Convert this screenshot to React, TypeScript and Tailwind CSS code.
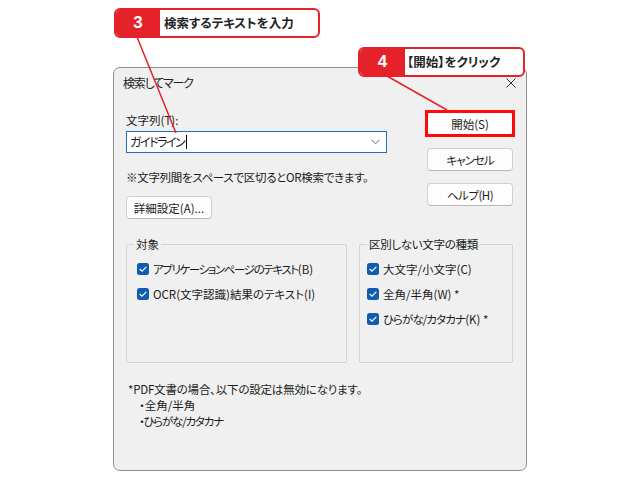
import React from "react";

const Check = () => (
  <svg width="12" height="12" viewBox="0 0 12 12" className="shrink-0">
    <rect x="0" y="0" width="12" height="12" rx="2.5" fill="#0f5cb0" />
    <path d="M3 6.3 L5.1 8.2 L9 4.2" stroke="#ffffff" strokeWidth="1.2" fill="none" strokeLinecap="round" strokeLinejoin="round" />
  </svg>
);

const Row = ({ children }: { children: React.ReactNode }) => (
  <div className="flex items-center gap-[4px] h-[16px]">
    <Check />
    <span>{children}</span>
  </div>
);

const Btn = ({ children, className = "" }: { children: React.ReactNode; className?: string }) => (
  <div
    className={
      "h-[23px] w-[86px] flex items-center justify-center rounded-[4px] border border-[#d0d0d0] border-b-[#b8b8b8] bg-[#fdfdfd] " +
      className
    }
  >
    {children}
  </div>
);

export default function App() {
  return (
    <div className="relative w-[640px] h-[480px] bg-white overflow-hidden pt-[67px] pl-[113px] font-['Noto_Sans_CJK_JP',sans-serif] [font-feature-settings:'palt']">
      {/* dialog */}
      <div className="w-[414px] h-[404px] bg-[#f0f0f0] border border-[#8e8e8e] rounded-[7px] flex flex-col text-[11.5px] leading-[16px] text-[#1b1b1b]">
        <div className="h-[30px] flex items-center justify-between pl-[9px] pr-[10px]">
          <span className="text-[12px] text-[#222] tracking-[-1.2px]">検索してマーク</span>
          <svg width="10" height="10" viewBox="0 0 10 10">
            <path d="M0.5 0.5 L9.5 9.5 M9.5 0.5 L0.5 9.5" stroke="#333" strokeWidth="1" fill="none" />
          </svg>
        </div>
        <div className="flex flex-col pl-[12px] pr-[13px]">
          <div className="flex justify-between">
            <div className="w-[261px] flex flex-col">
              <div className="mt-[14px]">文字列(T):</div>
              <div className="mt-[3px] h-[22px] bg-white border border-[#1f6fc5] flex items-center justify-between pl-[3px] pr-[6px]">
                <div className="flex items-center">
                  <span className="text-[12px] tracking-[-1.5px]">ガイドライン</span>
                  <span className="ml-[2px] w-[1px] h-[14px] bg-black" />
                </div>
                <svg width="9" height="6" viewBox="0 0 9 6">
                  <path d="M0.5 0.8 L4.5 4.8 L8.5 0.8" stroke="#666" strokeWidth="1" fill="none" />
                </svg>
              </div>
              <div className="mt-[16px] tracking-[-0.3px]">※文字列間をスペースで区切るとOR検索できます。</div>
              <Btn className="mt-[11px] w-[86px]">詳細設定(A)...</Btn>
            </div>
            <div className="w-[86px] flex flex-col pt-[14px]">
              <div className="relative">
                <Btn className="bg-[#e0ecf8] border-[#4a90d9] border-b-[#4a90d9]">開始(S)</Btn>
                <div className="absolute -left-[2px] -right-[2px] -top-[2px] -bottom-[2px] border-[3.5px] border-[#ff0a0a]" />
              </div>
              <Btn className="mt-[13px]">
                <span className="tracking-[-1px]">キャンセル</span>
              </Btn>
              <Btn className="mt-[12px]">
                <span className="tracking-[-0.5px]">ヘルプ(H)</span>
              </Btn>
            </div>
          </div>
          <div className="mt-[25px] flex gap-[12px]">
            <div className="relative w-[221px] h-[119px] border border-[#d4d4d4] rounded-[2px] flex flex-col pl-[10px] pt-[16px] gap-[9px]">
              <span className="absolute -top-[9px] left-[7px] px-[2px] bg-[#f0f0f0]">対象</span>
              <Row>
                <span className="tracking-[-1.4px]">アプリケーションページのテキスト</span>
                <span>(B)</span>
              </Row>
              <Row>OCR(文字認識)結果のテキスト(I)</Row>
            </div>
            <div className="relative w-[154px] h-[119px] border border-[#d4d4d4] rounded-[2px] flex flex-col pl-[7px] pt-[16px] gap-[9px]">
              <span className="absolute -top-[9px] left-[7px] px-[2px] bg-[#f0f0f0] tracking-[-0.3px]">区別しない文字の種類</span>
              <Row>大文字/小文字(C)</Row>
              <Row>全角/半角(W) *</Row>
              <Row>
                <span className="tracking-[-0.9px]">ひらがな/カタカナ</span>
                <span>(K) *</span>
              </Row>
            </div>
          </div>
          <div className="mt-[18px] ml-[2px] flex flex-col">
            <div className="tracking-[-0.2px]">*PDF文書の場合、以下の設定は無効になります。</div>
            <div className="ml-[11px]">・全角/半角</div>
            <div className="ml-[11px] tracking-[-1.2px]">・ひらがな/カタカナ</div>
          </div>
        </div>
      </div>

      {/* leader lines */}
      <svg className="absolute left-0 top-0 pointer-events-none" width="640" height="480">
        <line x1="137" y1="37" x2="176" y2="133" stroke="#e5212a" strokeWidth="1.5" />
        <line x1="387" y1="76" x2="447" y2="110" stroke="#e5212a" strokeWidth="1.5" />
      </svg>

      {/* callout 3 */}
      <div className="absolute left-[114px] top-[8px] w-[206px] h-[30px] flex rounded-[6px] border-2 border-[#e5212a] overflow-hidden bg-white">
        <div className="w-[44px] bg-[#e5212a] flex items-center justify-center text-white font-bold text-[17px] font-['Liberation_Sans',sans-serif]">
          3
        </div>
        <div className="flex items-center pl-[4px] text-[12.5px] font-bold text-[#222]">検索するテキストを入力</div>
      </div>

      {/* callout 4 */}
      <div className="absolute left-[358px] top-[47px] w-[167px] h-[30px] flex rounded-[6px] border-2 border-[#e5212a] overflow-hidden bg-white">
        <div className="w-[45px] bg-[#e5212a] flex items-center justify-center text-white font-bold text-[17px] font-['Liberation_Sans',sans-serif]">
          4
        </div>
        <div className="flex items-center pl-[2px] text-[12.5px] font-bold text-[#222]">【開始】をクリック</div>
      </div>
    </div>
  );
}
